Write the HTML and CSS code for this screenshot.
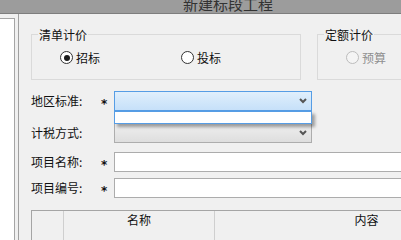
FILE: index.html
```html
<!DOCTYPE html>
<html lang="zh-CN">
<head>
<meta charset="utf-8">
<title>新建标段工程</title>
<link rel="stylesheet" href="styles.css">
</head>
<body>
<div class="window">
  <div class="titlebar"><span class="title">新建标段工程</span></div>
  <div class="body">
    <div class="side"><div class="side-panel"></div></div>
    <div class="main">
      <div class="groups">
        <fieldset class="group group-list">
          <legend>清单计价</legend>
          <div class="radios">
            <span class="radio"><span class="dot checked"></span>招标</span>
            <span class="radio radio-second"><span class="dot"></span>投标</span>
          </div>
        </fieldset>
        <fieldset class="group group-quota">
          <legend>定额计价</legend>
          <div class="radios">
            <span class="radio disabled"><span class="dot"></span>预算</span>
          </div>
        </fieldset>
      </div>

      <div class="row row-region">
        <span class="label">地区标准:</span><span class="req">*</span>
        <div class="combo combo-active">
          <svg class="chev" width="8" height="6" viewBox="0 0 8 6"><polyline points="1,1 4,4 7,1" fill="none" stroke="#555" stroke-width="2"/></svg>
          <div class="dropdown"></div>
        </div>
      </div>
      <div class="row row-tax">
        <span class="label">计税方式:</span><span class="req empty"></span>
        <div class="combo">
          <svg class="chev" width="8" height="6" viewBox="0 0 8 6"><polyline points="1,1 4,4 7,1" fill="none" stroke="#555" stroke-width="2"/></svg>
        </div>
      </div>
      <div class="row row-name">
        <span class="label">项目名称:</span><span class="req">*</span>
        <div class="input"></div>
      </div>
      <div class="row row-code">
        <span class="label">项目编号:</span><span class="req">*</span>
        <div class="input"></div>
      </div>

      <div class="grid">
        <div class="cell c1"></div>
        <div class="cell c2">名称</div>
        <div class="cell c3">内容</div>
      </div>
    </div>
  </div>
</div>
</body>
</html>
```

FILE: styles.css
```css
html, body {
  margin: 0;
  padding: 0;
  overflow: hidden;
  background: #f0f0f0;
}
.window {
  width: 401px;
  overflow: hidden;
  font-family: "Noto Sans CJK SC", "Noto Sans", sans-serif;
  font-size: 12px;
  color: #111;
  background: #f0f0f0;
}
.titlebar {
  height: 13px;
  border-bottom: 1px solid #7e7e7e;
  background: #9c9c9c;
  display: flex;
  justify-content: center;
  padding-left: 55px;
  overflow: hidden;
}
.title {
  font-size: 15px;
  line-height: 15px;
  margin-top: -4px;
  color: #333;
  white-space: nowrap;
}
.body {
  display: flex;
  height: 320px;
}
.side {
  width: 18px;
  flex: none;
}
.side-panel {
  margin-top: 4px;
  width: 14px;
  height: 300px;
  background: #fff;
  border-top: 1px solid #a5a5a5;
  border-right: 1px solid #a5a5a5;
}
.main {
  flex: none;
  width: 620px;
  border-left: 1px solid #a0a0a0;
  padding-left: 12px;
}
.groups {
  display: flex;
  margin-top: 13px;
}
.group {
  margin: 0;
  padding: 9px 0 15px 0;
  border: 1px solid #dadada;
  min-width: 0;
  box-sizing: border-box;
}
.group legend {
  padding: 0 1px;
  margin-left: 6px;
  line-height: 15px;
  font-size: 12px;
  color: #111;
}
.group-list {
  width: 270px;
}
.group-quota {
  width: 140px;
  margin-left: 16px;
}
.radios {
  display: flex;
  height: 13px;
  align-items: center;
}
.radio {
  display: flex;
  align-items: center;
  margin-left: 28px;
  line-height: 13px;
  white-space: nowrap;
}
.radio-second {
  margin-left: 81px;
}
.dot {
  width: 11px;
  height: 11px;
  border: 1px solid #333;
  border-radius: 50%;
  background: #fff;
  margin-right: 3px;
  display: flex;
  align-items: center;
  justify-content: center;
}
.dot.checked::after {
  content: "";
  width: 6px;
  height: 6px;
  border-radius: 50%;
  background: #1a1a1a;
}
.radio.disabled {
  color: #8f8f8f;
}
.radio.disabled .dot {
  border-color: #bcbcbc;
  background: #f4f4f4;
}
.row {
  display: flex;
  align-items: center;
  height: 20px;
}
.row-region { margin-top: 11px; }
.row-tax { margin-top: 12px; }
.row-name { margin-top: 9px; }
.row-code { margin-top: 6px; }
.label {
  width: 70px;
  flex: none;
  line-height: 14px;
}
.req {
  width: 13px;
  flex: none;
  font-family: "DejaVu Sans", sans-serif;
  font-size: 12px;
  line-height: 12px;
  padding-top: 5px;
  font-weight: bold;
  color: #111;
}
.combo {
  position: relative;
  box-sizing: border-box;
  width: 198px;
  height: 20px;
  border: 1px solid #adadad;
  background: linear-gradient(#efefef, #dedede);
  display: flex;
  align-items: center;
  justify-content: flex-end;
  padding-right: 4px;
}
.combo-active {
  border-color: #569de5;
  background: linear-gradient(#e0effc, #c6e0f9);
  z-index: 2;
}
.chev {
  display: block;
}
.dropdown {
  position: absolute;
  left: -1px;
  top: 19px;
  width: 198px;
  height: 13px;
  box-sizing: border-box;
  border: 1px solid #569de5;
  background: #fff;
  box-shadow: 3px 3px 3px rgba(0, 0, 0, 0.35);
}
.input {
  box-sizing: border-box;
  width: 400px;
  height: 20px;
  border: 1px solid #acacac;
  background: #fff;
}
.grid {
  margin-top: 12px;
  display: flex;
  width: 540px;
  height: 30px;
  border-top: 1px solid #a5a5a5;
  border-left: 1px solid #a5a5a5;
  background: #f0f0f0;
}
.cell {
  box-sizing: border-box;
  text-align: center;
  padding-top: 2px;
  line-height: 14px;
  border-right: 1px solid #cfcfcf;
}
.c1 { width: 32px; }
.c2 { width: 151px; }
.c3 { width: 304px; }
```
